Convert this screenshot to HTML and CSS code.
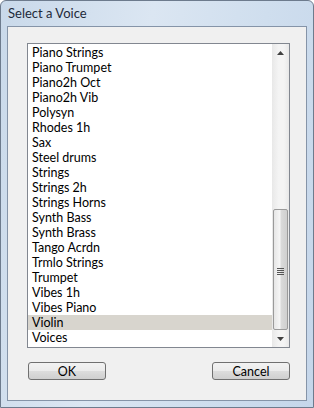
FILE: index.html
```html
<!DOCTYPE html>
<html lang="en">
  <head>
    <meta charset="UTF-8" />
    <title>Select a Voice</title>
    <link rel="stylesheet" href="styles.css">
  </head>
  <body>
    <div class="window">
      <div class="titlebar">Select a Voice</div>
      <div class="client">
        <div class="listbox">
          <ul class="items">
            <li>Piano Strings</li>
            <li>Piano Trumpet</li>
            <li>Piano2h Oct</li>
            <li>Piano2h Vib</li>
            <li>Polysyn</li>
            <li>Rhodes 1h</li>
            <li>Sax</li>
            <li>Steel drums</li>
            <li>Strings</li>
            <li>Strings 2h</li>
            <li>Strings Horns</li>
            <li>Synth Bass</li>
            <li>Synth Brass</li>
            <li>Tango Acrdn</li>
            <li>Trmlo Strings</li>
            <li>Trumpet</li>
            <li>Vibes 1h</li>
            <li>Vibes Piano</li>
            <li class="selected">Violin</li>
            <li>Voices</li>
          </ul>
          <div class="scrollbar">
            <div class="arrow">
              <svg width="7" height="4" viewBox="0 0 7 4"><path d="M0 4 L3.5 0 L7 4 Z" fill="#404040"/></svg>
            </div>
            <div class="track">
              <div class="thumb">
                <div class="grip"><span></span><span></span><span></span><span></span></div>
              </div>
            </div>
            <div class="arrow">
              <svg width="7" height="4" viewBox="0 0 7 4"><path d="M0 0 L7 0 L3.5 4 Z" fill="#404040"/></svg>
            </div>
          </div>
        </div>
        <div class="buttons">
          <button class="btn">OK</button>
          <button class="btn">Cancel</button>
        </div>
      </div>
    </div>
  </body>
</html>
```

FILE: styles.css
```css
body {
  margin: 0;
  font-family: Lato, "Open Sans", sans-serif;
  font-size: 12.5px;
  color: #000;
}
.window {
  width: 314px;
  height: 408px;
  box-sizing: border-box;
  border: 1px solid #6d7b8d;
  border-radius: 6px 6px 0 0;
  background: linear-gradient(100deg, #c9d9ea 0%, #dbe6f2 40%, #cfdeee 70%, #c5d6ea 100%);
  display: flex;
  flex-direction: column;
}
.titlebar {
  height: 25px;
  padding-left: 7px;
  line-height: 24px;
  font-size: 13px;
  color: #1e2a3a;
}
.client {
  margin: 0 6px;
  height: 375px;
  box-sizing: border-box;
  border: 1px solid #8594a8;
  background-color: #f0f0f0;
  padding: 16px 16px 0 19px;
}
.listbox {
  display: flex;
  width: 263px;
  height: 305px;
  box-sizing: border-box;
  border: 1px solid #828790;
  background-color: white;
}
.items {
  flex: 1;
  list-style: none;
  margin: 0;
  padding: 1px 0 0 0;
}
.items li {
  height: 15px;
  line-height: 15px;
  padding-left: 4px;
  white-space: nowrap;
}
.items li.selected {
  background-color: #d8d5ce;
}
.scrollbar {
  width: 17px;
  display: flex;
  flex-direction: column;
  background: linear-gradient(90deg, #e8e8e8, #f4f4f4 40%, #f4f4f4 70%, #e8e8e8);
}
.arrow {
  height: 17px;
  display: flex;
  align-items: center;
  justify-content: center;
}
.track {
  flex: 1;
  display: flex;
  flex-direction: column;
  justify-content: flex-end;
}
.thumb {
  height: 121px;
  margin: 0 1px;
  box-sizing: border-box;
  border: 1px solid #9a9a9a;
  border-radius: 2px;
  background: linear-gradient(90deg, #e6e6e6, #f6f6f6 45%, #dadada 55%, #cfcfcf);
  display: flex;
  align-items: center;
  justify-content: center;
}
.grip {
  display: flex;
  flex-direction: column;
  gap: 1px;
  margin-top: 4px;
}
.grip span {
  display: block;
  width: 7px;
  height: 1px;
  background-color: #555;
}
.buttons {
  display: flex;
  justify-content: space-between;
  margin-top: 14px;
  margin-left: 1px;
  width: 262px;
}
.btn {
  width: 78px;
  height: 18px;
  padding: 0;
  border: 1px solid #707070;
  border-radius: 3px;
  background: linear-gradient(#f2f2f2, #ebebeb 50%, #dddddd 50%, #cfcfcf);
  font-family: Lato, "Open Sans", sans-serif;
  font-size: 12.5px;
  line-height: 15px;
  color: #000;
}
```
